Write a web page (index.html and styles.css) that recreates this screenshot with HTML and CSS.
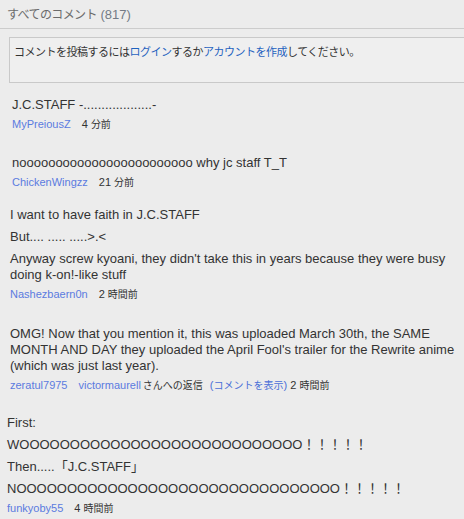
FILE: index.html
```html
<!DOCTYPE html>
<html lang="ja">
<head>
    <meta charset="UTF-8">
    <meta name="viewport" content="width=device-width, initial-scale=1.0">
    <title>すべてのコメント</title>
    <link rel="stylesheet" href="styles.css">
</head>
<body>
    <div class="comments-header">
        <span class="ja">すべてのコメント</span> <span class="count">(817)</span>
    </div>

    <div class="login-box">
        コメントを投稿するには<a href="#">ログイン</a>するか<a href="#">アカウントを作成</a>してください。
    </div>

    <div class="comment-list">
        <div class="comment c1">
            <p>J.C.STAFF -...................-</p>
            <div class="meta">
                <a class="author" href="#">MyPreiousZ</a><span class="time">4 <span class="ja">分前</span></span>
            </div>
        </div>

        <div class="comment c2">
            <p>noooooooooooooooooooooooo why jc staff T_T</p>
            <div class="meta">
                <a class="author" href="#">ChickenWingzz</a><span class="time">21 <span class="ja">分前</span></span>
            </div>
        </div>

        <div class="comment c3">
            <p>I want to have faith in J.C.STAFF</p>
            <p>But.... ..... .....&gt;.&lt;</p>
            <p>Anyway screw kyoani, they didn't take this in years because they were busy doing k-on!-like stuff</p>
            <div class="meta">
                <a class="author" href="#">Nashezbaern0n</a><span class="time">2 <span class="ja">時間前</span></span>
            </div>
        </div>

        <div class="comment c4">
            <p>OMG! Now that you mention it, this was uploaded March 30th, the SAME MONTH AND DAY they uploaded the April Fool's trailer for the Rewrite anime (which was just last year).</p>
            <div class="meta">
                <a class="author" href="#">zeratul7975</a><a class="reply-user" href="#">victormaurell</a><span class="ja reply-label">さんへの返信</span><a class="show-link" href="#">(<span class="ja">コメントを表示</span>)</a> <span class="time">2 <span class="ja">時間前</span></span>
            </div>
        </div>

        <div class="comment c5">
            <p>First:</p>
            <p>WOOOOOOOOOOOOOOOOOOOOOOOOOOOO！！！！！</p>
            <p>Then.....「J.C.STAFF」</p>
            <p>NOOOOOOOOOOOOOOOOOOOOOOOOOOOOOOOO！！！！！</p>
            <div class="meta">
                <a class="author" href="#">funkyoby55</a><span class="time">4 <span class="ja">時間前</span></span>
            </div>
        </div>
    </div>
</body>
</html>
```

FILE: styles.css
```css
body {
    margin: 0;
    padding: 0;
    background-color: #ececec;
    color: #333;
    font-family: "Liberation Sans", Arial, "Noto Sans CJK JP", sans-serif;
}
a {
    text-decoration: none;
}
.ja {
    font-family: "Noto Sans CJK JP", sans-serif;
}

/* cabecera */
.comments-header {
    padding: 4px 7px 3px;
    line-height: 20px;
    font-size: 13px;
    color: #6b6b6b;
    border-bottom: 1px solid #cccccc;
}
.comments-header .ja {
    font-size: 12px;
    letter-spacing: -0.6px;
}
.comments-header .count {
    color: #737b86;
}

/* caja de inicio de sesión */
.login-box {
    margin: 8px 0 0 9px;
    padding: 5px 0 23px 4px;
    border: 1px solid #c9c9c9;
    border-right: none;
    background-color: #efefef;
    font-family: "Noto Sans CJK JP", sans-serif;
    font-size: 11px;
    letter-spacing: -0.5px;
    line-height: 16px;
    color: #333;
}
.login-box a {
    color: #1f62bf;
}

/* comentarios */
.comment-list {
    margin-top: 14px;
}
.comment {
    padding: 0 4px 0 12px;
}
.comment p {
    margin: 0;
    font-size: 13px;
    line-height: 16px;
}
.comment p + p {
    margin-top: 6px;
}
.c1 { margin-bottom: 23px; }
.c2 { margin-bottom: 17px; }
.c3 { margin-bottom: 24px; padding-left: 10px; }
.c4 { margin-bottom: 22px; padding-left: 10px; }
.c5 { padding-left: 7px; }

.meta {
    margin-top: 3px;
    font-size: 11px;
    line-height: 15px;
}
.meta .ja {
    font-size: 10px;
}
.author,
.reply-user {
    color: #5b7be0;
}
.author {
    margin-right: 11px;
}
.reply-label {
    margin-left: 2px;
    margin-right: 7px;
    color: #333;
}
.show-link {
    color: #4a6fd8;
}
.time {
    color: #333;
}
```
